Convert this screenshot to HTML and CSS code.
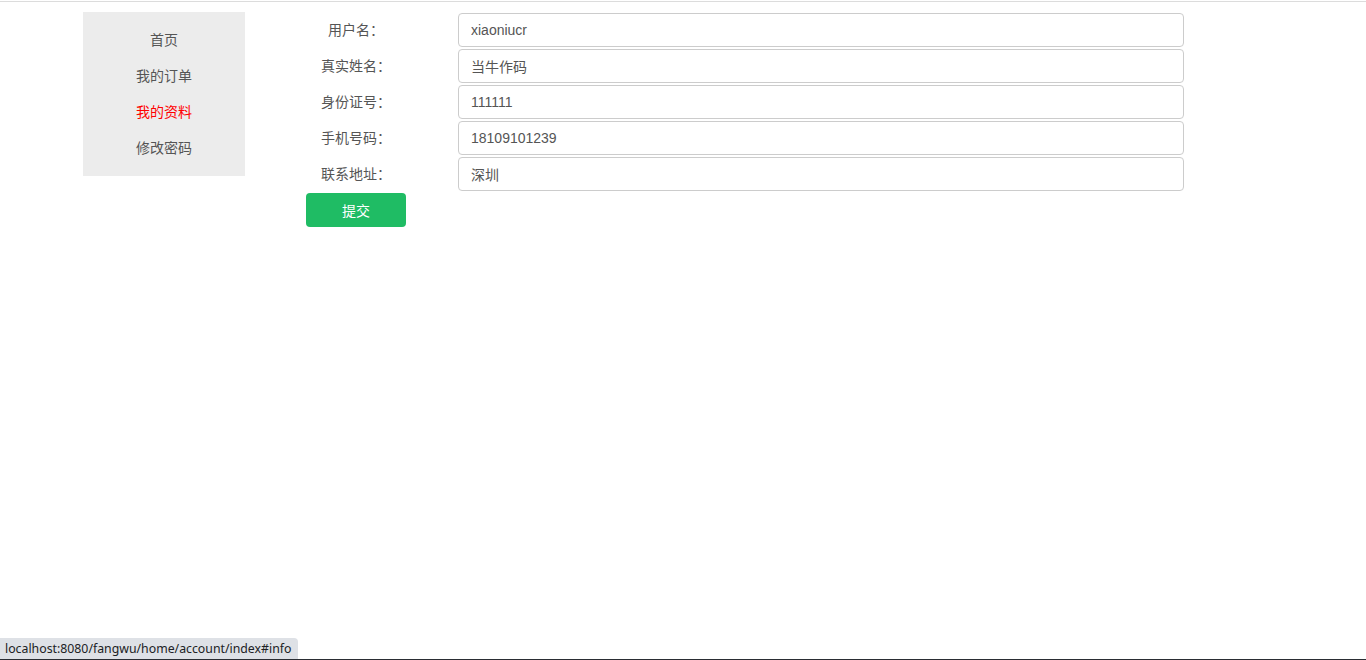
FILE: index.html
```html
<!DOCTYPE html>
<html lang="zh-CN">
<head>
    <meta charset="UTF-8">
    <meta name="viewport" content="width=device-width, initial-scale=1.0">
    <title>我的资料</title>
    <link rel="stylesheet" href="styles.css">
</head>
<body>
    <div class="topline"></div>
    <div class="container">
        <ul class="side-menu">
            <li><a href="#home">首页</a></li>
            <li><a href="#order">我的订单</a></li>
            <li><a href="#info" class="active">我的资料</a></li>
            <li><a href="#pwd">修改密码</a></li>
        </ul>
        <form class="info-form">
            <div class="form-row">
                <label>用户名：</label>
                <input type="text" class="form-input" value="xiaoniucr">
            </div>
            <div class="form-row">
                <label>真实姓名：</label>
                <input type="text" class="form-input" value="当牛作码">
            </div>
            <div class="form-row">
                <label>身份证号：</label>
                <input type="text" class="form-input" value="111111">
            </div>
            <div class="form-row">
                <label>手机号码：</label>
                <input type="text" class="form-input" value="18109101239">
            </div>
            <div class="form-row">
                <label>联系地址：</label>
                <input type="text" class="form-input" value="深圳">
            </div>
            <button type="button" class="btn-submit">提交</button>
        </form>
    </div>
    <div class="status-bar">localhost:8080/fangwu/home/account/index#info</div>
    <div class="bottom-line"></div>
</body>
</html>
```

FILE: styles.css
```css
body {
    margin: 0;
    font-family: "Liberation Sans", "Noto Sans CJK SC", sans-serif;
    font-size: 14px;
    color: #555;
    background: #fff;
}

.topline {
    height: 1px;
    margin-top: 1px;
    background: #dcdcdc;
}

.container {
    width: 1200px;
    margin: 0 auto;
    padding-top: 10px;
    display: flex;
    align-items: flex-start;
}

.side-menu {
    list-style: none;
    margin: 0;
    padding: 10px 0;
    width: 162px;
    background: #ececec;
    text-align: center;
}

.side-menu li {
    line-height: 36px;
}

.side-menu a {
    color: #555;
    text-decoration: none;
}

.side-menu a.active {
    color: #f00;
}

.info-form {
    margin-left: 61px;
    padding-top: 1px;
    width: 878px;
}

.form-row {
    display: flex;
    align-items: center;
    margin-bottom: 2px;
}

.form-row label {
    width: 100px;
    text-align: center;
    flex-shrink: 0;
    padding-bottom: 2px;
}

.form-input {
    margin-left: 52px;
    width: 726px;
    height: 34px;
    box-sizing: border-box;
    padding: 0 12px;
    border: 1px solid #ccc;
    border-radius: 4px;
    font-family: "Liberation Sans", "Noto Sans CJK SC", sans-serif;
    font-size: 14px;
    color: #555;
    outline: none;
}

.btn-submit {
    width: 100px;
    height: 34px;
    border: none;
    border-radius: 4px;
    background: #1fbc64;
    color: #fff;
    font-family: "Liberation Sans", "Noto Sans CJK SC", sans-serif;
    font-size: 14px;
    cursor: pointer;
}

.status-bar {
    position: fixed;
    left: 0;
    bottom: 1px;
    height: 21px;
    line-height: 21px;
    padding: 0 7px 0 5px;
    background: #dee1e6;
    border-top-right-radius: 4px;
    color: #202124;
    font-family: "Noto Sans", "Liberation Sans", sans-serif;
    font-size: 12.3px;
}

.bottom-line {
    position: fixed;
    left: 0;
    right: 0;
    bottom: 0;
    height: 1px;
    background: #2a2d33;
}
```
